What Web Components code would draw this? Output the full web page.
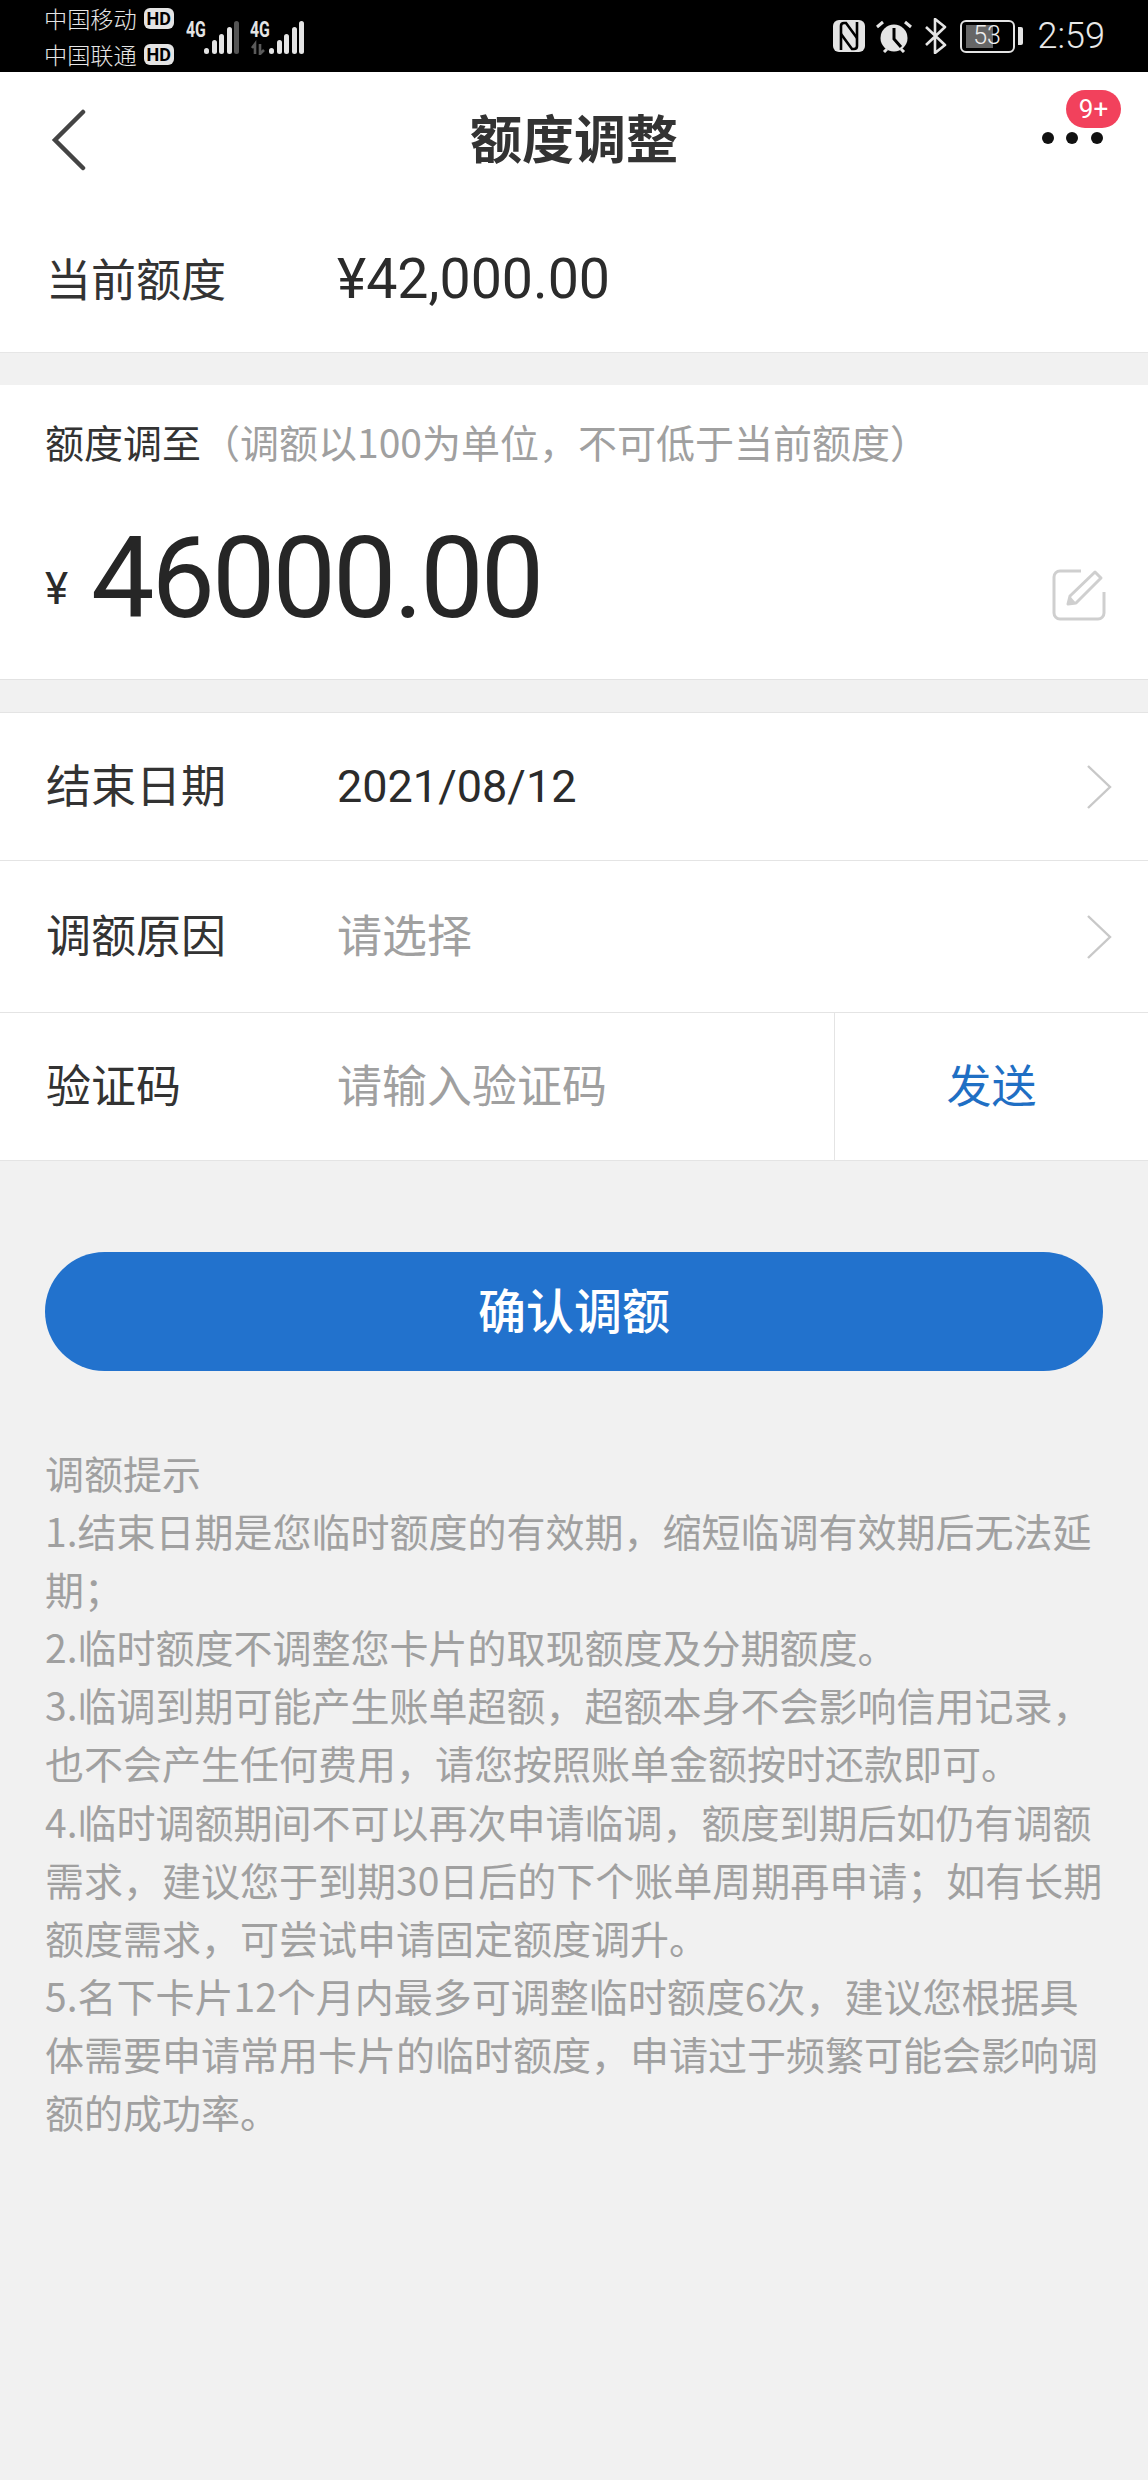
<!DOCTYPE html>
<html lang="zh-CN"><head><meta charset="utf-8"><title>额度调整</title>
<style>
html,body{margin:0;padding:0;background:#f1f1f1}
body{width:1148px;height:2480px;overflow:hidden;font-family:"Noto Sans CJK SC","Noto Sans",sans-serif;color:#333}
</style></head>
<body>
<status-bar></status-bar>
<top-bar title="额度调整"></top-bar>
<current-limit label="当前额度" value="¥42,000.00"></current-limit>
<adjust-card amount="46000.00"></adjust-card>
<form-list>
  <form-row label="结束日期" value="2021/08/12" chevron></form-row>
  <form-row label="调额原因" placeholder="请选择" chevron></form-row>
  <form-row label="验证码" placeholder="请输入验证码" action="发送" last></form-row>
</form-list>
<primary-button>确认调额</primary-button>
<tips-block>
<span>调额提示</span>
<span>1.结束日期是您临时额度的有效期，缩短临调有效期后无法延</span>
<span>期；</span>
<span>2.临时额度不调整您卡片的取现额度及分期额度。</span>
<span>3.临调到期可能产生账单超额，超额本身不会影响信用记录，</span>
<span>也不会产生任何费用，请您按照账单金额按时还款即可。</span>
<span>4.临时调额期间不可以再次申请临调，额度到期后如仍有调额</span>
<span>需求，建议您于到期30日后的下个账单周期再申请；如有长期</span>
<span>额度需求，可尝试申请固定额度调升。</span>
<span>5.名下卡片12个月内最多可调整临时额度6次，建议您根据具</span>
<span>体需要申请常用卡片的临时额度，申请过于频繁可能会影响调</span>
<span>额的成功率。</span>
</tips-block>
<script>
const CJK='"Noto Sans CJK SC","Noto Sans",sans-serif';
function def(name,html){
  customElements.define(name,class extends HTMLElement{
    connectedCallback(){
      if(this.shadowRoot)return;
      const r=this.attachShadow({mode:'open'});
      r.innerHTML=typeof html==='function'?html(this):html;
    }
  });
}
const bars=(ox,dim)=>{
  const xs=[0,8,15,23,30],ys=[27,19,13,6,0];
  return xs.map((x,i)=>`<rect x="${ox+x}" y="${ys[i]}" width="5" height="${33-ys[i]}" rx="2.5" fill="${dim&&i===4?'#555':'#e4e4e4'}"/>`).join('');
};
def('status-bar',()=>`<style>
:host{display:flex;height:72px;background:#000;color:#e6e6e6;font-family:${CJK};justify-content:space-between;box-sizing:border-box;padding:0 43px 0 44px}
.left,.right{display:flex;align-items:center}
.carriers{display:flex;flex-direction:column;gap:11px;font-size:23.2px;line-height:25px;margin-top:1px}
.c{display:flex;align-items:center;gap:7px;white-space:nowrap;font-weight:300}
.hd{display:inline-flex;width:30px;height:21px;background:#e4e4e4;border-radius:6px;color:#000;font:700 18px/21px "Roboto",sans-serif;justify-content:center}
.net{display:grid;height:34px;margin-top:3px;align-items:start}
.net>*{grid-area:1/1}
.g{font:700 22px/17px "Roboto",sans-serif;color:#e4e4e4;transform:scaleX(.72);transform-origin:left top;white-space:nowrap}
.n1{margin-left:12px;width:53px}.n2{margin-left:11px;width:54px}
.time{font:300 36px/1 "Roboto",sans-serif;margin-left:15px;color:#e8e8e8}
.bat{position:relative;width:55px;height:33px;border:2.5px solid #e4e4e4;border-radius:6px;box-sizing:border-box;font:300 25px/28px "Roboto",sans-serif;text-align:center;margin-left:13px;color:#eee}
.bat i{position:absolute;left:4px;top:3px;bottom:3px;width:27px;background:#666}
.bat b{position:relative;font-weight:300}
.nub{width:5px;height:18px;background:#e4e4e4;border-radius:0 2px 2px 0;margin-left:3px}
svg{display:block}
</style>
<div class="left">
  <div class="carriers"><div class="c">中国移动<span class="hd">HD</span></div><div class="c">中国联通<span class="hd">HD</span></div></div>
  <div class="net n1"><svg width="53" height="34" viewBox="0 0 53 34">${bars(18,true)}</svg><span class="g">4G</span></div>
  <div class="net n2"><svg width="54" height="34" viewBox="0 0 54 34"><path d="M5 33V23l-3 4M10 23v10l4-4" fill="none" stroke="#5a5a5a" stroke-width="2.6"/>${bars(19,false)}</svg><span class="g">4G</span></div>
</div>
<div class="right">
  <svg width="32" height="32" viewBox="0 0 32 32"><rect width="32" height="32" rx="6" fill="#e4e4e4"/><path d="M8 30V6q0-3 3-3h2L24 18" fill="none" stroke="#000" stroke-width="2.6"/><path d="M24 2v24q0 3-3 3h-2L8 14" fill="none" stroke="#000" stroke-width="2.6"/></svg>
  <svg style="margin-left:11px" width="36" height="33" viewBox="0 0 36 33"><circle cx="18" cy="18" r="13.5" fill="#e4e4e4"/><path d="M18 8v11l7 8" fill="none" stroke="#000" stroke-width="3"/><path d="M1 7l6-5M35 7l-6-5M8 32l3-3M28 32l-3-3" stroke="#e4e4e4" stroke-width="3" fill="none"/></svg>
  <svg style="margin-left:12px" width="23" height="36" viewBox="0 0 23 36"><path d="M2 9l19 18-10 8V1l10 8L2 27" fill="none" stroke="#e4e4e4" stroke-width="2.6" stroke-linejoin="round"/></svg>
  <div class="bat"><i></i><b>53</b></div><div class="nub"></div>
  <div class="time">2:59</div>
</div>`);
def('top-bar',(h)=>`<style>
:host{display:flex;position:relative;height:136px;background:#fff;align-items:center;justify-content:center;font-family:${CJK}}
h1{margin:0 0 6px;font-size:52px;font-weight:700;color:#333;line-height:1}
.back{position:absolute;left:50px;top:37px}
.dots{position:absolute;left:1042px;top:60px}
.badge{position:absolute;left:1066px;top:18px;width:55px;height:38px;border-radius:19px;background:#f2415c;color:#fff;font:400 26px/38px "Roboto",sans-serif;text-align:center}
</style>
<svg class="back" width="38" height="62" viewBox="0 0 38 62"><path d="M33 3L5 31l28 28" fill="none" stroke="#444" stroke-width="4.5" stroke-linecap="round"/></svg>
<h1>${h.getAttribute('title')}</h1>
<svg class="dots" width="62" height="14" viewBox="0 0 62 14"><circle cx="6" cy="6" r="6" fill="#111"/><circle cx="30" cy="6" r="6" fill="#111"/><circle cx="55" cy="6" r="6" fill="#111"/></svg>
<div class="badge">9+</div>`);
def('current-limit',(h)=>`<style>
:host{display:flex;height:145px;box-sizing:border-box;background:#fff;border-bottom:1px solid #e6e6e6;align-items:center;padding-left:46px;font-family:${CJK};color:#333}
.l{width:291px;font-size:45px;line-height:1;margin-bottom:6px}
.v{font:400 55.5px/1 "Roboto",sans-serif;color:#2b2b2b}
</style><div class="l">${h.getAttribute('label')}</div><div class="v">${h.getAttribute('value')}</div>`);
def('adjust-card',(h)=>`<style>
:host{display:block;position:relative;margin-top:32px;height:295px;box-sizing:border-box;background:#fff;border-bottom:1px solid #e2e2e2;padding:34px 45px 0;font-family:${CJK}}
.t{font-size:39px;line-height:44px;color:#333;white-space:nowrap}
.t span{color:#a0a0a0}
.amt{margin-top:59px;font:400 113px/113px "Roboto",sans-serif;color:#262626;letter-spacing:-3px;white-space:nowrap}
.y{display:inline-block;width:46px;font-size:44px;letter-spacing:0;line-height:1;vertical-align:13px;color:#2b2b2b}
.edit{position:absolute;left:1052px;top:183px}
</style>
<div class="t">额度调至<span>（调额以100为单位，不可低于当前额度）</span></div>
<div class="amt"><span class="y">¥</span>${h.getAttribute('amount')}</div>
<svg class="edit" width="54" height="54" viewBox="0 0 54 54"><path d="M29 3H8a6 6 0 0 0-6 6v36a6 6 0 0 0 6 6h38a6 6 0 0 0 6-6V24" fill="none" stroke="#cfcfcf" stroke-width="3"/><path d="M16 36l2-8L43 4l6 6-25 25z" fill="none" stroke="#cfcfcf" stroke-width="3" stroke-linejoin="round"/><path d="M16 36l2-8 6 7z" fill="#cfcfcf"/></svg>`);
def('form-list','<style>:host{display:block;margin-top:32px;border-top:1px solid #e4e4e4}</style><slot></slot>');
def('form-row',(h)=>{
  const val=h.getAttribute('value'),ph=h.getAttribute('placeholder'),act=h.getAttribute('action');
  return `<style>
:host{display:flex;height:${h.getAttribute('label')==='调额原因'?152:148}px;box-sizing:border-box;background:#fff;border-bottom:1px solid #e4e4e4;align-items:center;padding-left:46px;font-family:${CJK};position:relative}
.l{width:291px;font-size:45px;line-height:1;color:#333;margin-bottom:6px}
.v{font:400 45px/1 "Roboto",sans-serif;color:#2b2b2b}
.p{font-size:45px;line-height:1;color:#a0a0a0;margin-bottom:6px}
svg{position:absolute;left:1086px;top:50%;margin-top:-22px}
.a{position:absolute;left:834px;top:0;bottom:0;right:0;border-left:1px solid #e4e4e4;display:flex;align-items:center;justify-content:center;color:#1f6fc4;font-size:45px;padding-bottom:6px;box-sizing:border-box}
</style><div class="l">${h.getAttribute('label')}</div>
${val?`<div class="v">${val}</div>`:''}${ph?`<div class="p">${ph}</div>`:''}
${h.hasAttribute('chevron')?'<svg width="26" height="44" viewBox="0 0 26 44"><path d="M2 1l22 21L2 43" fill="none" stroke="#c8c8c8" stroke-width="2.4"/></svg>':''}
${act?`<div class="a">${act}</div>`:''}`;
});
def('primary-button',`<style>
:host{display:flex;box-sizing:border-box;margin:91px 45px 0;height:119px;padding-bottom:8px;border-radius:60px;background:#2272cd;color:#fff;align-items:center;justify-content:center;font-family:${CJK};font-size:48px;font-weight:500;line-height:1}
</style><slot></slot>`);
def('tips-block',`<style>
:host{display:block;margin-top:72px;padding:0 45px;font-family:${CJK};font-size:39px;line-height:58.1px;color:#a0a0a0}
::slotted(span){display:block;white-space:nowrap}
</style><slot></slot>`);
</script>
</body></html>
